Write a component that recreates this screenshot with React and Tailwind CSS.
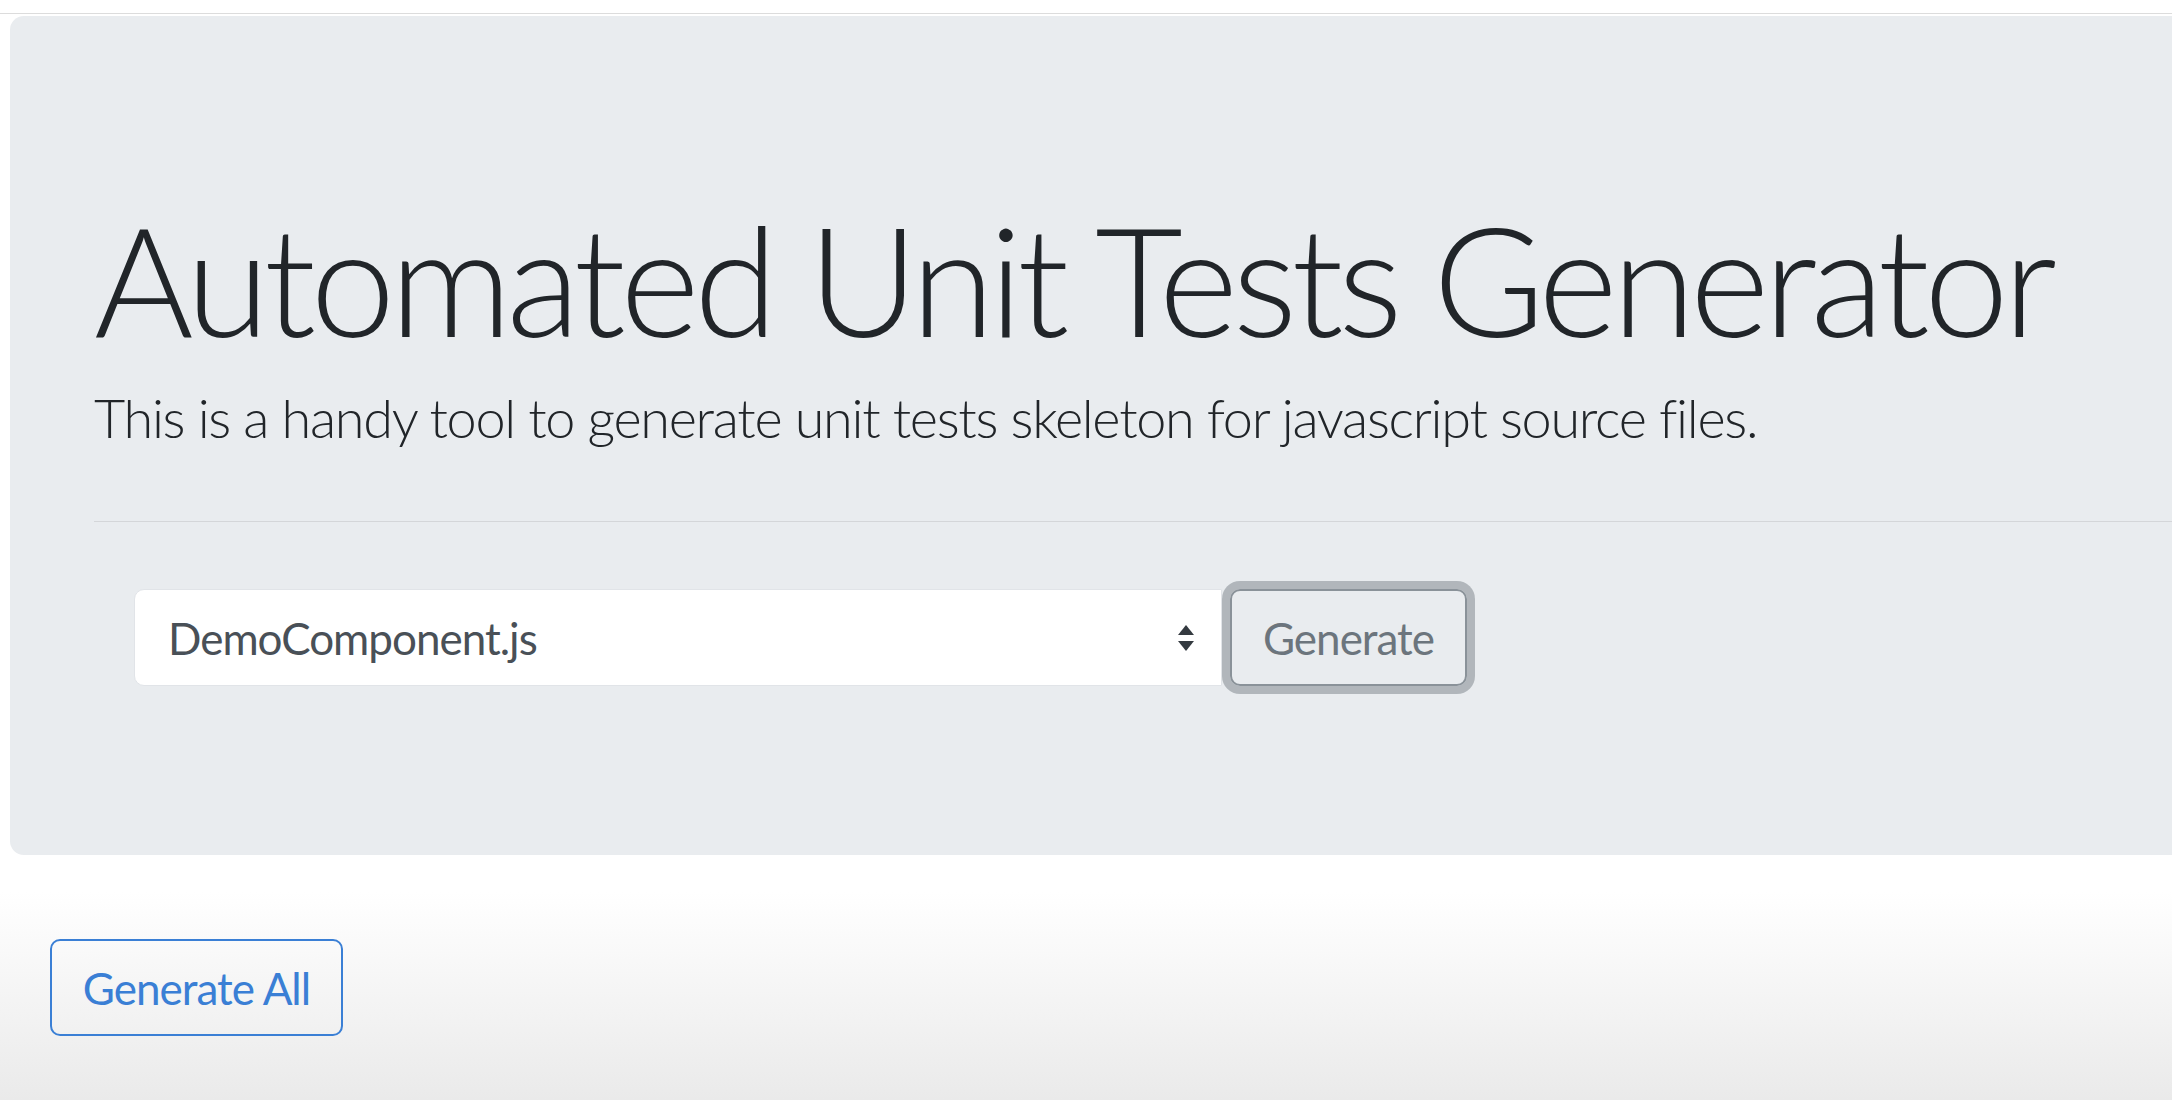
export default function App() {
  return (
    <div
      className="h-[1100px] w-full overflow-hidden bg-white"
      style={{ fontFamily: 'Lato, "Open Sans", sans-serif' }}
    >
      <div className="h-[14px] border-b border-[#dcdcdc]" />
      <div className="pl-[10px] pt-[2px]">
        <div className="h-[839px] w-[2200px] rounded-l-[14px] bg-[#e9ecef] pl-[84px] pt-[186px]">
          <h1 className="whitespace-nowrap text-[152px] font-light leading-none tracking-[-5.5px] text-[#212529]">
            Automated Unit Tests Generator
          </h1>
          <p className="mt-[37px] whitespace-nowrap text-[54px] font-light leading-none tracking-[-1.3px] text-[#212529]">
            This is a handy tool to generate unit tests skeleton for javascript source files.
          </p>
          <hr className="mt-[76px] border-t border-[#d4d6d9]" />
          <div className="mt-[67px] flex items-center pl-[40px]">
            <div className="flex h-[97px] w-[1088px] items-center justify-between rounded-l-[10px] border border-[#e1e4e8] bg-white pl-[33px] pr-[30px]">
              <span className="text-[44px] tracking-[-1px] text-[#495057]">DemoComponent.js</span>
              <svg width="18" height="30" viewBox="0 0 18 30" className="mr-[-4px]">
                <path d="M9 2 L17 12 L1 12 Z" fill="#343a40" />
                <path d="M1 18 L17 18 L9 28 Z" fill="#343a40" />
              </svg>
            </div>
            <button className="ml-[8px] flex h-[97px] w-[237px] items-center justify-center rounded-[10px] border-2 border-[#8a9299] text-[44px] tracking-[-1px] text-[#6c757d] shadow-[0_0_0_8px_rgba(108,117,125,0.45)]">
              Generate
            </button>
          </div>
        </div>
      </div>
      <div className="h-[245px] bg-gradient-to-b from-white from-15% to-[#eaeaea] pl-[50px] pt-[84px]">
        <button className="flex h-[97px] w-[293px] items-center justify-center rounded-[10px] border-2 border-[#3a7fd5] text-[44px] tracking-[-1px] text-[#3a7fd5]">
          Generate All
        </button>
      </div>
    </div>
  )
}
